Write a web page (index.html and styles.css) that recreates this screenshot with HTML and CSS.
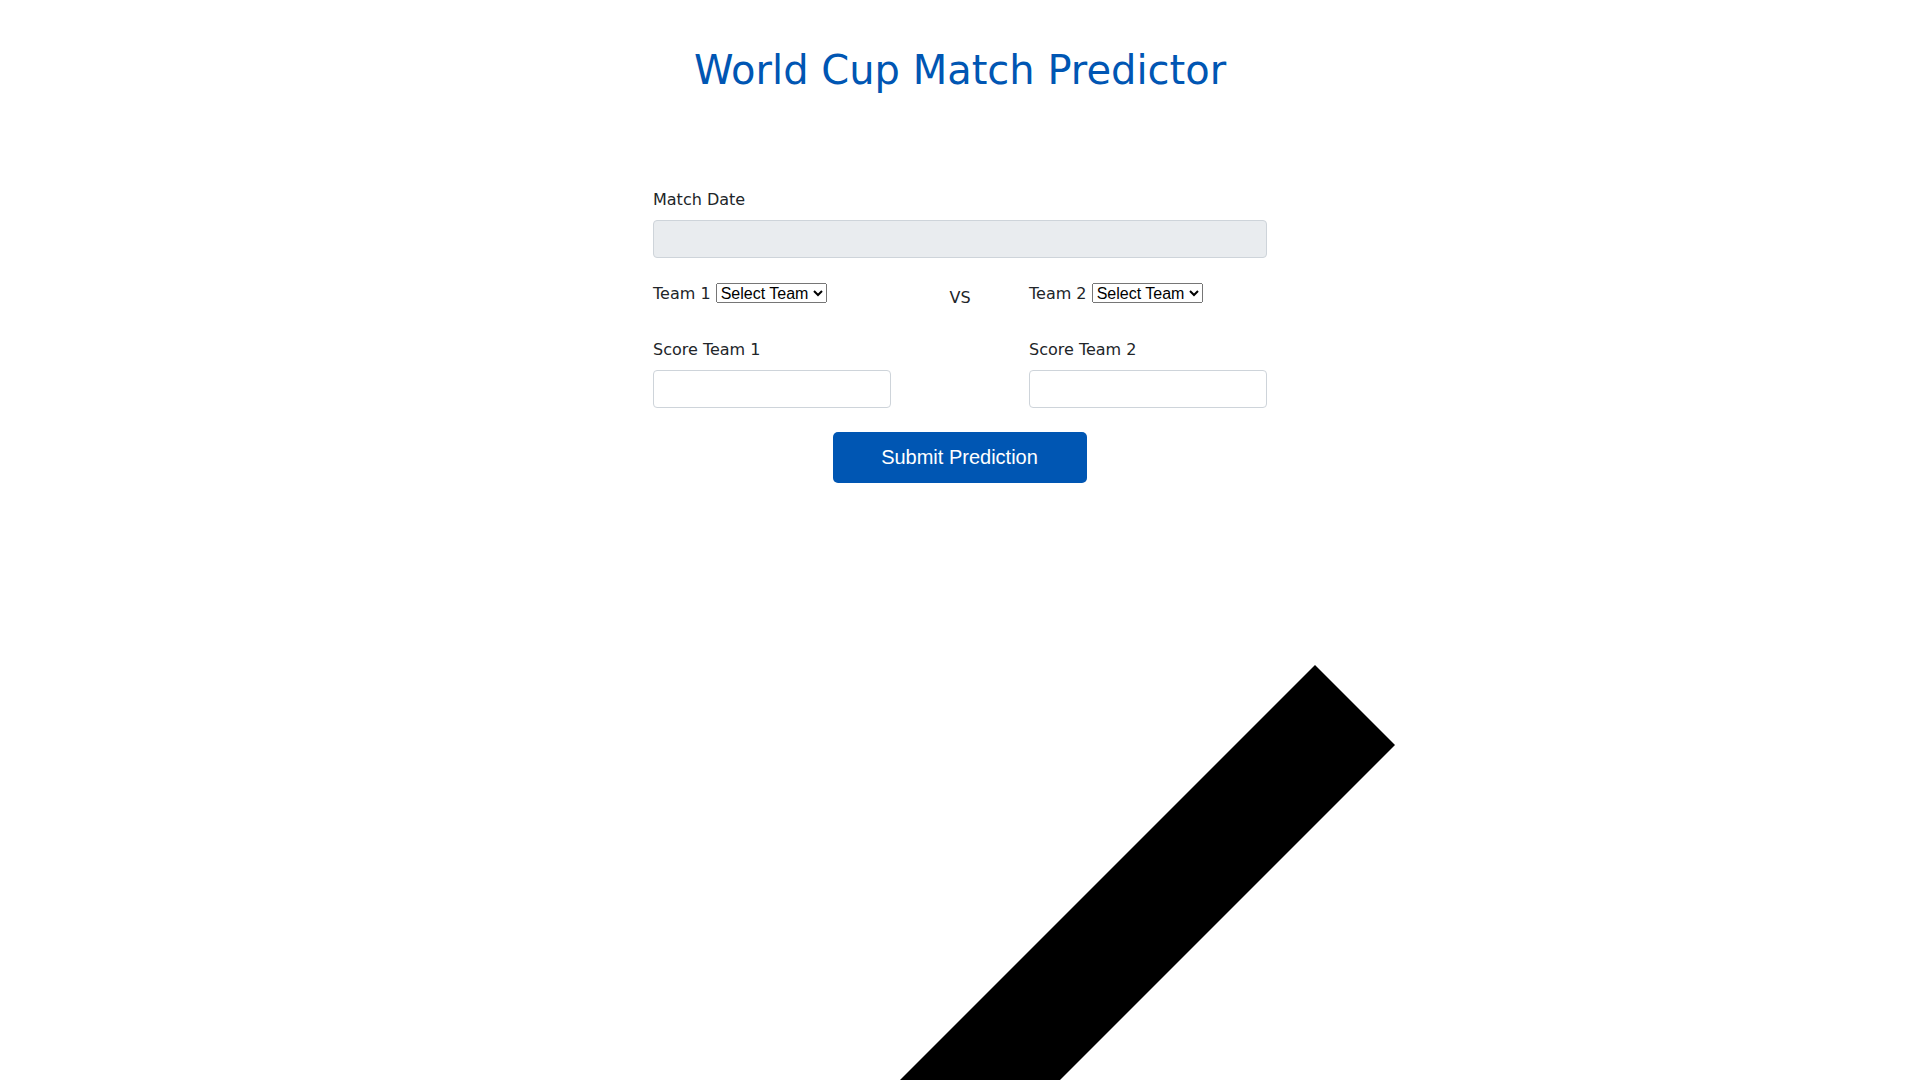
FILE: index.html
```html
<!DOCTYPE html>
<html lang="en">
<head>
<meta charset="utf-8">
<title>World Cup Match Predictor</title>
<link rel="stylesheet" href="styles.css">
</head>
<body>
<h1 class="title">World Cup Match Predictor</h1>
<form class="predict-form">
  <div class="field">
    <label class="field-label" for="date">Match Date</label>
    <input class="input input-readonly" id="date" type="text" readonly>
  </div>
  <div class="teams-row">
    <div class="team">
      <label for="t1">Team 1</label>
      <select class="team-select" id="t1"><option>Select Team</option></select>
    </div>
    <div class="vs">VS</div>
    <div class="team">
      <label for="t2">Team 2</label>
      <select class="team-select" id="t2"><option>Select Team</option></select>
    </div>
  </div>
  <div class="scores-row">
    <div class="field score">
      <label class="field-label" for="s1">Score Team 1</label>
      <input class="input" id="s1" type="number">
    </div>
    <div class="field score">
      <label class="field-label" for="s2">Score Team 2</label>
      <input class="input" id="s2" type="number">
    </div>
  </div>
  <div class="actions">
    <button class="submit" type="button">Submit Prediction</button>
  </div>
</form>
<svg class="slash" width="1920" height="1080" viewBox="0 0 1920 1080" aria-hidden="true">
  <polygon points="1315,665 1395,745 1060,1080 900,1080" fill="#000"/>
</svg>
</body>
</html>
```

FILE: styles.css
```css
html, body {
  margin: 0;
  padding: 0;
  background: #fff;
}
body {
  font-family: "DejaVu Sans", sans-serif;
  font-size: 16px;
  line-height: 1.5;
  color: #212529;
  overflow: hidden;
  height: 1080px;
  position: relative;
}
.title {
  margin: 46px 0 0;
  text-align: center;
  font-size: 40px;
  font-weight: normal;
  line-height: 48px;
  color: #0056b3;
}
.predict-form {
  width: 614px;
  margin: 94px auto 0;
}
.field-label {
  display: block;
  margin-bottom: 8px;
}
.input {
  display: block;
  box-sizing: border-box;
  width: 100%;
  height: 38px;
  border: 1px solid #ced4da;
  border-radius: 4px;
  background: #fff;
  padding: 6px 12px;
  font: inherit;
  margin: 0;
}
.input-readonly {
  background: #e9ecef;
}
.teams-row {
  display: flex;
  justify-content: space-between;
  align-items: flex-start;
  margin-top: 24px;
  height: 26px;
}
.team {
  width: 238px;
  line-height: 24px;
}
.team-select {
  font-family: "Liberation Sans", Arial, sans-serif;
  font-size: 16px;
  height: 20px;
  padding: 0;
}
.vs {
  padding-top: 4px;
  line-height: 24px;
}
.scores-row {
  display: flex;
  justify-content: space-between;
  margin-top: 30px;
}
.score {
  width: 238px;
}
.actions {
  display: flex;
  justify-content: center;
  margin-top: 24px;
}
.submit {
  font-family: "Liberation Sans", Arial, sans-serif;
  font-size: 20px;
  line-height: 24px;
  color: #fff;
  background: #0056b3;
  border: 0;
  border-radius: 5px;
  padding: 13px 49px 14px 48px;
}
.slash {
  position: absolute;
  left: 0;
  top: 0;
  pointer-events: none;
}
```
